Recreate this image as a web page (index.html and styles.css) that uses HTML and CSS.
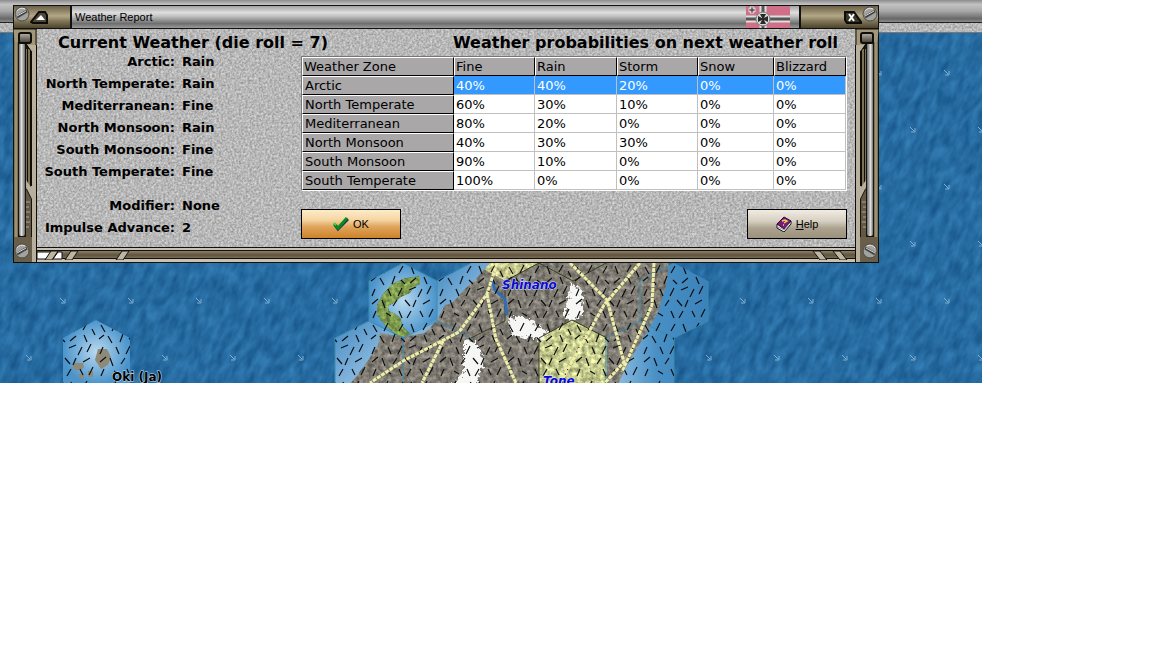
FILE: index.html
```
<!DOCTYPE html>
<html lang="en">
<head>
  <meta charset="UTF-8" />
  <meta name="viewport" content="width=device-width, initial-scale=1.0" />
  <title>Weather Report</title>
  <link rel="stylesheet" href="styles.css">
</head>
<body>

  <main class="game">
    <div class="toolbar">
      <svg class="grain"><rect width="100%" height="100%" filter="url(#stone)"/></svg>
      <div class="toolbar-metal"></div>
    </div>

    <!-- Map -->
    <svg class="map" viewBox="0 33 982 350" preserveAspectRatio="xMinYMin slice" role="img" aria-label="Map">
      <defs>
        <filter id="stone" x="0" y="0" width="100%" height="100%" color-interpolation-filters="sRGB">
          <feTurbulence type="fractalNoise" baseFrequency="0.45" numOctaves="3" seed="4"/>
          <feColorMatrix values="0.4 0 0 0 0.52  0.4 0 0 0 0.52  0.4 0 0 0 0.52  0 0 0 0 1"/>
        </filter>
        <filter id="waves" x="0" y="0" width="100%" height="100%" color-interpolation-filters="sRGB">
          <feTurbulence type="fractalNoise" baseFrequency="0.14 0.06" numOctaves="3" seed="8"/>
          <feColorMatrix values="0.16 0 0 0 0.07  0.22 0 0 0 0.31  0.24 0 0 0 0.51  0 0 0 0 1"/>
        </filter>
        <filter id="rough" x="0" y="0" width="100%" height="100%" color-interpolation-filters="sRGB">
          <feTurbulence type="fractalNoise" baseFrequency="0.22" numOctaves="4" seed="3" result="n"/>
          <feColorMatrix in="n" values="1 0 0 0 0  1 0 0 0 0  1 0 0 0 0  0 0 0 0 1" result="g"/>
          <feComposite in="SourceGraphic" in2="g" operator="arithmetic" k1="0.9" k2="0.5" result="c"/>
          <feComposite in="c" in2="SourceGraphic" operator="in"/>
        </filter>
        <filter id="ragged" x="-20%" y="-20%" width="140%" height="140%">
          <feTurbulence type="fractalNoise" baseFrequency="0.3" numOctaves="2" seed="5"/>
          <feDisplacementMap in="SourceGraphic" scale="12" xChannelSelector="R" yChannelSelector="G"/>
        </filter>
        <radialGradient id="shallow">
          <stop offset="0" stop-color="#b9d9f0"/>
          <stop offset="1" stop-color="#4a94cb"/>
        </radialGradient>
        <linearGradient id="coast" x1="0" y1="0" x2="1" y2="1">
          <stop offset="0" stop-color="#4389c2"/>
          <stop offset="1" stop-color="#b4d6ef"/>
        </linearGradient>
        <linearGradient id="coastEast" x1="0" y1="0" x2="1" y2="0">
          <stop offset="0" stop-color="#9cc8e8"/>
          <stop offset="0.5" stop-color="#488fc5"/>
          <stop offset="1" stop-color="#3a82b9"/>
        </linearGradient>
        <pattern id="currents" width="68" height="114" patternUnits="userSpaceOnUse">
          <path d="M60 70l4 4M65 71v4h-4M26 13l4 4M31 14v4h-4" fill="none" stroke="#7fb0d2"/>
        </pattern>
        <pattern id="rain" width="68" height="58" y="263" x="29" patternUnits="userSpaceOnUse">
          <path d="M4 4l4 7M19 2l-4 8M34 3l-4 7M42 3l3 8M58 2l-4 7M63 8l3 6M2 18l5-4M11 15l4 7M26 13l-3 8M32 17l4 4M47 15l-6 5M55 14l3 7M6 26l-3 7M19 26l3 7M33 25l-4 8M40 27l7-3M53 26l-4 8M62 23l-4 8M3 41l6-5M13 37l3 8M28 37l-4 6M36 37l5 6M47 37l-3 7M54 41l7-4M7 48l-3 7M17 50l5 3M30 48l3 7M42 48l-4 7M51 48l3 6M64 46l-4 8" stroke="#0b0d10" stroke-width="1.2"/>
        </pattern>
        <clipPath id="isle-land">
          <path d="M490 263L474 281L467 287L452 303L445 305L437 320L425 333L403 337L380 333L378 345L367 362L355 378L350 384H618L630 360L648 330L658 312L667 282L669 263Z"/>
        </clipPath>
      </defs>

      <!-- sea -->
      <g transform="rotate(24)">
        <rect x="-20" y="-400" width="1100" height="850" filter="url(#waves)"/>
      </g>
      <rect y="33" width="982" height="350" fill="url(#currents)"/>

      <!-- coastal hexes -->
      <path d="M96 320l34 18v46H63v-46z" fill="url(#shallow)"/>
      <path d="M403 263l34 18v40l-34 17-34-17v-40z" fill="url(#shallow)"/>
      <path d="M437 281l34-18h30v58h-64z" fill="url(#coast)"/>
      <path d="M369 321l34 17v46h-68v-46z" fill="url(#coast)"/>
      <path d="M403 337l34-17 20 10v20h-54z" fill="#82b4da"/>
      <path d="M640 281l34-18 34 18v40l-34 17-34-17zM606 338l34-17 34 17v46h-68z" fill="url(#coastEast)"/>

      <!-- land -->
      <g clip-path="url(#isle-land)">
        <rect x="340" y="260" width="340" height="124" fill="#87837a" filter="url(#rough)"/>
        <path d="M471 263h68l-34 18z" fill="#cfd093" filter="url(#rough)"/>
        <path d="M572 320l35 18v46h-68v-46z" fill="#ced494" filter="url(#rough)"/>
        <g fill="#f6f6f4" filter="url(#ragged)">
          <path d="M464 339l15 5 5 20-9 22h-22l11-16z"/>
          <path d="M508 318l14-2 25 15-3 9-32-5z"/>
          <path d="M571 284l10 5 3 24-12 9-8-6z"/>
        </g>
      </g>
      <path d="M420 276l-15 2-13 6-9 10-6 11v10l7 9 9 8 5 5 14-2-10-9-1-8-7-5-5-2-1-5 6-3 7-6 9-4 4-6 6-3z" fill="#86a552" filter="url(#rough)"/>
      <g fill="#8f8a78">
        <path d="M98 349l9 0 4 8-3 8-7 4-6-9z"/>
        <path d="M73 363l10 0 1 5-7 3-4-3zM79 374l5 0v5l-5-1zM88 371l5 0v6h-5z"/>
      </g>

      <!-- hex borders and the river -->
      <g fill="none" stroke="#3c8caf">
        <path d="M369 281l34-18 34 18v40l-34 17-34-17z"/>
        <path d="M437 281l34-18M437 321l34 17M403 338v46M335 384v-46l34-17"/>
        <path d="M640 281l34-18M640 281v40l34 17v46M640 321l-34 17v46M708 281v40l-34 17"/>
      </g>
      <path d="M539 384v-46l33-18 35 18M471 338l34-17v-40l34-18 34 18 33-18" fill="none" stroke="#3b3d20"/>
      <path d="M492 281l3 9 10 9 2 16" fill="none" stroke="#2f6db5" stroke-width="3"/>

      <!-- weather hatching -->
      <g fill="url(#rain)">
        <path d="M96 320l34 18v46H63v-46z"/>
        <path d="M369 281l34-18 34 18 34-18h203l34 18v40l-34 17v46H335v-46l34-17z"/>
      </g>

      <!-- rail lines -->
      <g fill="none" stroke="#eeeea9" stroke-width="3" stroke-dasharray="4 1">
        <path d="M497 263l-10 31-28 38-56 29-33 22M443 341l-21 42M487 294l9 45 20 44M570 263l37 37 17 62-20 22M640 263l-36 42-44 78M654 263l-2 42-18 40-12 27"/>
      </g>

      <g class="place">
        <text x="502" y="289">Shinano</text>
        <text x="543" y="385">Tone</text>
      </g>
      <text class="place-island" x="112" y="381">Oki (Ja)</text>
    </svg>

    <!-- Weather dialog -->
    <section class="dialog" aria-labelledby="dialog-title">
      <header class="titlebar">
        <div class="cap cap-left">
          <svg class="screw" viewBox="0 0 16 16"><use href="#screw"/></svg>
          <button type="button" class="cap-button" aria-label="Roll up">
            <svg width="18" height="13" viewBox="0 0 18 13">
              <path d="M1 11L9 1h6l2 3v8H3z" fill="#4e4939" stroke="#0c0b08" stroke-width="2"/>
              <path d="M6 9l5-5 4 5z" fill="#fff"/>
            </svg>
          </button>
        </div>
        <h1 id="dialog-title">Weather Report</h1>
        <svg class="flag" viewBox="0 0 44 22" role="img" aria-label="Germany">
          <rect width="44" height="22" fill="#d06f88"/>
          <path d="M17 0v22M0 13h44" stroke="#dedede" stroke-width="7"/>
          <path d="M17 0v22M0 13h44" stroke="#555" stroke-width="3"/>
          <circle cx="17" cy="13" r="7" fill="#d8d8d8" stroke="#777"/>
          <path d="M14 8h6l-2 4 4-2v6l-4-2 2 4h-6l2-4-4 2v-6l4 2z" fill="#2a2a2a"/>
          <path d="M4 1h4l-1 2 2-1v4l-2-1 1 2H4l1-2-2 1V2l2 1z" fill="#555" stroke="#ddd"/>
        </svg>
        <div class="cap cap-right">
          <button type="button" class="cap-button" aria-label="Close">
            <svg width="18" height="13" viewBox="0 0 18 13">
              <path d="M1 1h9l7 10v1H3L1 9z" fill="#39352a" stroke="#0c0b08" stroke-width="2"/>
              <path d="M5 3l5 7M10 3l-5 7" stroke="#fff" stroke-width="2"/>
            </svg>
          </button>
          <svg class="screw" viewBox="0 0 16 16"><use href="#screw"/></svg>
        </div>
      </header>

      <div class="frame">
        <svg class="rail" viewBox="0 0 24 234" preserveAspectRatio="none" aria-hidden="true">
          <defs>
            <linearGradient id="tube">
              <stop offset="0" stop-color="#6c6c6c"/>
              <stop offset="0.4" stop-color="#e2e2e2"/>
              <stop offset="1" stop-color="#6a6a6a"/>
            </linearGradient>
            <linearGradient id="brass">
              <stop offset="0" stop-color="#6b6248"/>
              <stop offset="0.5" stop-color="#aca17e"/>
              <stop offset="1" stop-color="#6d6247"/>
            </linearGradient>
            <linearGradient id="knob" x2="0" y2="1">
              <stop offset="0" stop-color="#b9b5aa"/>
              <stop offset="1" stop-color="#3f3b33"/>
            </linearGradient>
            <g id="screw">
              <circle cx="8" cy="8" r="7" fill="#a2a2a0" stroke="#4b4a46"/>
              <path d="M3 5a6 6 0 0 1 8-2" fill="none" stroke="#e2e2e0"/>
              <path d="M3 11L13 5" stroke="#44423c" stroke-width="3"/>
              <path d="M3 10L12 5" stroke="#d6d6d2"/>
            </g>
            <g id="rail-art">
              <rect width="24" height="234" fill="#17140e"/>
              <rect x="1" width="4" height="234" fill="url(#brass)"/>
              <rect x="6" y="14" width="6" height="193" rx="2" fill="url(#tube)"/>
              <rect x="13" y="20" width="4" height="140" fill="#7d7256"/>
              <path d="M14.500 20v140M17.500 20v140" stroke="#0f0d08"/>
              <path d="M14 15h9v219h-4v-64l-6-12v-7l5 7V22z" fill="#b8b09d"/>
              <path d="M18.500 23v134M14 17l5 6" fill="none" stroke="#0f0d08"/>
              <path d="M13 160l5 10v38h-5z" fill="#625845"/>
              <path d="M13 173h4M13 178h3M13 183h4M13 188h3M13 193h4M13 198h3" stroke="#b0a78f"/>
              <path d="M0 0h24v16h-9l-4-3H2z" fill="#a3977a"/>
              <path d="M0 0h24M23 0v16" stroke="#17140e"/>
              <rect x="6" y="4" width="12" height="10" rx="2" fill="url(#knob)" stroke="#0f0d08" stroke-width="2"/>
              <path d="M1 208h18v25H1z" fill="#685e49"/>
              <svg x="1" y="214" width="16" height="16" viewBox="0 0 16 16"><use href="#screw"/></svg>
              <path d="M0 0v234M23.500 16v218M0 233.500h24" stroke="#0f0d08"/>
            </g>
          </defs>
          <use href="#rail-art"/>
        </svg>

        <div class="middle">
          <div class="content">
            <svg class="grain"><rect width="100%" height="100%" filter="url(#stone)"/></svg>

            <section class="current">
              <h2>Current Weather (die roll = 7)</h2>
              <dl>
                <dt>Arctic:</dt><dd>Rain</dd>
                <dt>North Temperate:</dt><dd>Rain</dd>
                <dt>Mediterranean:</dt><dd>Fine</dd>
                <dt>North Monsoon:</dt><dd>Rain</dd>
                <dt>South Monsoon:</dt><dd>Fine</dd>
                <dt>South Temperate:</dt><dd>Fine</dd>
              </dl>
              <dl>
                <dt>Modifier:</dt><dd>None</dd>
                <dt>Impulse Advance:</dt><dd>2</dd>
              </dl>
            </section>

            <section class="forecast">
              <h2>Weather probabilities on next weather roll</h2>
              <table>
                <colgroup>
                  <col class="col-zone"><col class="col-fine"><col class="col-rain"><col class="col-storm"><col class="col-snow"><col class="col-blizzard">
                </colgroup>
                <thead>
                  <tr><th scope="col">Weather Zone</th><th scope="col">Fine</th><th scope="col">Rain</th><th scope="col">Storm</th><th scope="col">Snow</th><th scope="col">Blizzard</th></tr>
                </thead>
                <tbody>
                  <tr class="selected"><th scope="row">Arctic</th><td>40%</td><td>40%</td><td>20%</td><td>0%</td><td>0%</td></tr>
                  <tr><th scope="row">North Temperate</th><td>60%</td><td>30%</td><td>10%</td><td>0%</td><td>0%</td></tr>
                  <tr><th scope="row">Mediterranean</th><td>80%</td><td>20%</td><td>0%</td><td>0%</td><td>0%</td></tr>
                  <tr><th scope="row">North Monsoon</th><td>40%</td><td>30%</td><td>30%</td><td>0%</td><td>0%</td></tr>
                  <tr><th scope="row">South Monsoon</th><td>90%</td><td>10%</td><td>0%</td><td>0%</td><td>0%</td></tr>
                  <tr><th scope="row">South Temperate</th><td>100%</td><td>0%</td><td>0%</td><td>0%</td><td>0%</td></tr>
                </tbody>
              </table>
              <div class="actions">
                <button type="button" class="btn btn-ok">
                  <svg width="16" height="16" viewBox="0 0 16 16">
                    <path d="M2 9l3 4L15 3" fill="none" stroke="#12306b" stroke-width="3"/>
                    <path d="M1 8l4 4L14 2" fill="none" stroke="#0b8a1c" stroke-width="3"/>
                    <path d="M1 7l2 2" stroke="#3fd83f" stroke-width="2"/>
                  </svg>
                  OK
                </button>
                <button type="button" class="btn btn-help">
                  <svg width="16" height="16" viewBox="0 0 16 16">
                    <path d="M1 8v4l7 4 7-8V5z" fill="#fff" stroke="#111"/>
                    <path d="M1 8l7-7 7 4-7 8z" fill="#7a1a80" stroke="#2b0730"/>
                    <path d="M2 11l6 3 6-7" fill="none" stroke="#999"/>
                    <path d="M6 5l3-1 2 1-3 2M7 9h1" fill="none" stroke="#f0d640" stroke-width="1.500"/>
                  </svg>
                  <span><u>H</u>elp</span>
                </button>
              </div>
            </section>
          </div>

          <div class="sill">
            <svg width="96" height="9" viewBox="0 0 96 9">
              <path d="M0 1h14l-5 7H0zM21 1h4v7h-9z" fill="#fff" stroke="#111"/>
              <path d="M14 0h7l-6 9H8zM34 0h7l-6 9h-7zM85 0h7l-6 9h-7z" fill="#bdb5a2" stroke="#17140e"/>
            </svg>
            <svg width="44" height="9" viewBox="0 0 44 9">
              <path d="M2 0h7l7 9H9zM22 0h7l7 9h-7z" fill="#bdb5a2" stroke="#17140e"/>
            </svg>
          </div>
        </div>

        <svg class="rail rail-right" viewBox="0 0 24 234" preserveAspectRatio="none" aria-hidden="true"><use href="#rail-art"/></svg>
      </div>
    </section>
  </main>

</body>
</html>
```
FILE: styles.css
```
/* RESET */
* {
  margin: 0;
  padding: 0;
  box-sizing: border-box;
}

body {
  background-color: #fff;
  color: #000;
  font-family: Verdana, "DejaVu Sans", sans-serif;
  font-size: 13px;
}

button {
  font: inherit;
  color: inherit;
  cursor: pointer;
}

/* GAME SCREEN */
.game {
  position: relative;
  width: 100%;
  max-width: 982px;
  overflow: hidden;
}

.toolbar {
  position: relative;
  height: 33px;
  border-bottom: 1px solid #777;
}

.toolbar-metal {
  position: relative;
  height: 23px;
  background: linear-gradient(#8c8c8c, #c2c2c2 20%, #a8a8a8 50%, #686868 85%, #8a8a8a);
  border-bottom: 1px solid #222;
}

.grain {
  position: absolute;
  top: 0;
  left: 0;
  width: 100%;
  height: 100%;
}

.map {
  display: block;
  width: 100%;
  height: 350px;
}

.place {
  font-size: 12px;
  font-weight: bold;
  font-style: italic;
  fill: #0a0ad0;
  stroke: #dde4f4;
  stroke-width: 1px;
  paint-order: stroke;
}

.place-island {
  font-size: 12px;
  font-weight: bold;
  fill: #000;
  stroke: #c4dcee;
  stroke-width: 1px;
  paint-order: stroke;
}

/* DIALOG */
.dialog {
  position: absolute;
  top: 5px;
  left: 13px;
  width: 866px;
}

.titlebar {
  display: flex;
  align-items: center;
  height: 24px;
  border: 1px solid #111;
  background: linear-gradient(#a2a2a2, #dedede 30%, #c4c4c4 45%, #6e6e6e 80%, #9a9a9a);
}

.titlebar h1 {
  flex: 1;
  padding-left: 3px;
  font-family: "Liberation Sans", sans-serif;
  font-size: 11px;
  font-weight: normal;
}

.flag {
  width: 44px;
  height: 22px;
  margin-right: 9px;
}

.cap {
  display: flex;
  align-items: center;
  height: 22px;
  background: linear-gradient(#6b6046, #b3a888 45%, #7e7355 70%, #4c432e);
}

.cap-left {
  width: 58px;
  border-right: 2px solid #111;
}

.cap-right {
  width: 79px;
  justify-content: flex-end;
  border-left: 2px solid #111;
}

.screw {
  width: 16px;
  height: 16px;
  margin-bottom: 6px;
}

.cap-button {
  height: 13px;
  border: none;
  background: none;
}

.cap-button svg,
.btn svg {
  display: block;
}

.frame {
  display: flex;
}

.rail {
  flex: none;
  width: 24px;
  height: 234px;
}

.rail-right {
  transform: scaleX(-1);
}

.middle {
  flex: 1;
  display: flex;
  flex-direction: column;
}

.content {
  flex: 1;
  position: relative;
  display: flex;
  background-color: #b9b9b9;
}

.content h2 {
  position: relative;
  font-size: 16px;
  line-height: 20px;
  white-space: nowrap;
}

/* Current weather */
.current {
  position: relative;
  width: 264px;
  padding-top: 4px;
}

.current h2 {
  padding-left: 21px;
}

.current dl {
  display: grid;
  grid-template-columns: 138px 1fr;
  column-gap: 7px;
  font-weight: bold;
  line-height: 22px;
}

.current h2 + dl {
  margin-top: -2px;
  margin-bottom: 12px;
}

.current dt {
  text-align: right;
  white-space: nowrap;
}

/* Forecast table */
.forecast {
  position: relative;
  flex: 1;
  padding: 4px 8px 0 0;
}

.forecast h2 {
  padding-left: 152px;
}

table {
  width: 100%;
  margin-top: 3px;
  border: 1px solid;
  border-color: #777 #fff #fff #777;
  border-collapse: separate;
  border-spacing: 0;
  table-layout: fixed;
  background-color: #fff;
}

.col-zone { width: 152px; }
.col-fine { width: 81px; }
.col-rain { width: 82px; }
.col-storm { width: 81px; }
.col-snow { width: 76px; }

th,
td {
  height: 19px;
  padding-left: 2px;
  line-height: 17px;
  font-weight: normal;
  text-align: left;
}

th {
  padding-left: 1px;
  background-color: #a9a7a8;
  border: 1px solid;
  border-color: #fff #000 #000 #fff;
}

tbody th {
  padding-left: 2px;
}

td {
  border: solid #c0c0c0;
  border-width: 0 1px 1px 0;
}

.selected td {
  background-color: #3399ff;
  color: #fff;
}

/* Buttons */
.actions {
  display: flex;
  justify-content: space-between;
  margin-top: 18px;
}

.btn {
  display: flex;
  align-items: center;
  justify-content: center;
  gap: 4px;
  width: 100px;
  height: 30px;
  border: 1px solid #000;
  font-family: "Liberation Sans", sans-serif;
  font-size: 11px;
}

.btn-ok {
  background: linear-gradient(#fdebc8, #f5d6a4 35%, #dfa45c 60%, #cd8328);
}

.btn-help {
  background: linear-gradient(#f1ece2, #d6cfc1 40%, #aba18e 65%, #9c917c);
}

/* Bottom frame */
.sill {
  display: flex;
  justify-content: space-between;
  align-items: center;
  height: 16px;
  background: linear-gradient(#111 1px, #c9c2b2 1px 3px, #111 3px 4px, #8b7f66 4px, #5e5340 8px, #7a6c52 11px, #111 11px 12px, #c9c2b2 12px 15px, #111 15px);
}
```
